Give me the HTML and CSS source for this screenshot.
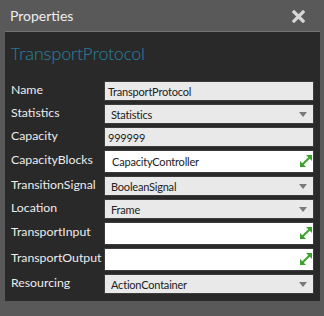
FILE: index.html
```html
<!DOCTYPE html>
<html lang="en">
<head>
    <meta charset="UTF-8">
    <title>Properties</title>
    <link rel="stylesheet" href="styles.css">
</head>
<body>
    <div class="window">
        <div class="window-header">
            <span class="window-title">Properties</span>
            <svg class="close" width="13" height="13" viewBox="0 0 13 13"><path d="M2 2 L11 11 M11 2 L2 11" stroke="#d6d6d6" stroke-width="3.2" stroke-linecap="square"/></svg>
        </div>
        <div class="panel">
            <div class="object-name">TransportProtocol</div>
            <div class="rows">
                <div class="row"><label>Name</label><div class="field">TransportProtocol</div></div>
                <div class="row"><label>Statistics</label><div class="field select">Statistics<span class="arrow"></span></div></div>
                <div class="row"><label>Capacity</label><div class="field">999999</div></div>
                <div class="row tall"><label>CapacityBlocks</label><div class="field link">CapacityController<span class="expand"><svg width="14" height="14" viewBox="0 0 14 14"><path d="M3 11 L11 3" stroke="#3aa32a" stroke-width="2"/><path d="M7 1 H13 V7 Z" fill="#3aa32a"/><path d="M1 7 V13 H7 Z" fill="#3aa32a"/></svg></span></div></div>
                <div class="row"><label>TransitionSignal</label><div class="field select">BooleanSignal<span class="arrow"></span></div></div>
                <div class="row"><label>Location</label><div class="field select">Frame<span class="arrow"></span></div></div>
                <div class="row tall"><label>TransportInput</label><div class="field link"><span class="expand"><svg width="14" height="14" viewBox="0 0 14 14"><path d="M3 11 L11 3" stroke="#3aa32a" stroke-width="2"/><path d="M7 1 H13 V7 Z" fill="#3aa32a"/><path d="M1 7 V13 H7 Z" fill="#3aa32a"/></svg></span></div></div>
                <div class="row tall"><label>TransportOutput</label><div class="field link"><span class="expand"><svg width="14" height="14" viewBox="0 0 14 14"><path d="M3 11 L11 3" stroke="#3aa32a" stroke-width="2"/><path d="M7 1 H13 V7 Z" fill="#3aa32a"/><path d="M1 7 V13 H7 Z" fill="#3aa32a"/></svg></span></div></div>
                <div class="row"><label>Resourcing</label><div class="field select">ActionContainer<span class="arrow"></span></div></div>
            </div>
        </div>
    </div>
</body>
</html>
```

FILE: styles.css
```css
body {
    margin: 0;
    background-color: #595959;
    font-family: "Segoe UI", Lato, sans-serif;
}
.window {
    width: 324px;
    height: 316px;
    padding: 0 4px 0 5px;
    box-sizing: border-box;
}
.window-header {
    height: 31px;
    display: flex;
    justify-content: space-between;
    align-items: center;
    padding: 0 15px 0 5px;
}
.window-title {
    color: #eeeeee;
    font-size: 14px;
}
.close {
    margin-top: 2px;
}
.panel {
    background-color: #292929;
    border-top: 1px solid #747474;
    height: 269px;
    padding: 0 6px 0 6px;
}
.object-name {
    color: #2a7893;
    font-family: "Segoe UI", "Noto Sans", sans-serif;
    font-size: 17px;
    font-weight: 300;
    height: 35px;
    padding-top: 10px;
    box-sizing: border-box;
    letter-spacing: -0.3px;
}
.rows {
    padding-top: 14px;
    display: flex;
    flex-direction: column;
    gap: 3px;
}
.row {
    display: flex;
    align-items: center;
    height: 20px;
}
.row.tall {
    height: 23px;
}
label {
    width: 93px;
    flex-shrink: 0;
    white-space: nowrap;
    color: #ececec;
    font-size: 12.3px;
    margin-top: -4px;
}
.field {
    flex: 1;
    height: 100%;
    box-sizing: border-box;
    border: 1px solid #3c3c3c;
    background-color: #e9e9e9;
    color: #222222;
    font-size: 11px;
    letter-spacing: -0.2px;
    display: flex;
    align-items: center;
    padding-left: 3px;
    position: relative;
}
.field.select {
    padding-left: 6px;
}
.field.link {
    background-color: #ffffff;
    padding-left: 7px;
}
.arrow {
    position: absolute;
    right: 6px;
    top: 7px;
    border-left: 4px solid transparent;
    border-right: 4px solid transparent;
    border-top: 5px solid #7a7a7a;
}
.expand {
    position: absolute;
    right: 0px;
    top: 3px;
    height: 14px;
}
```
